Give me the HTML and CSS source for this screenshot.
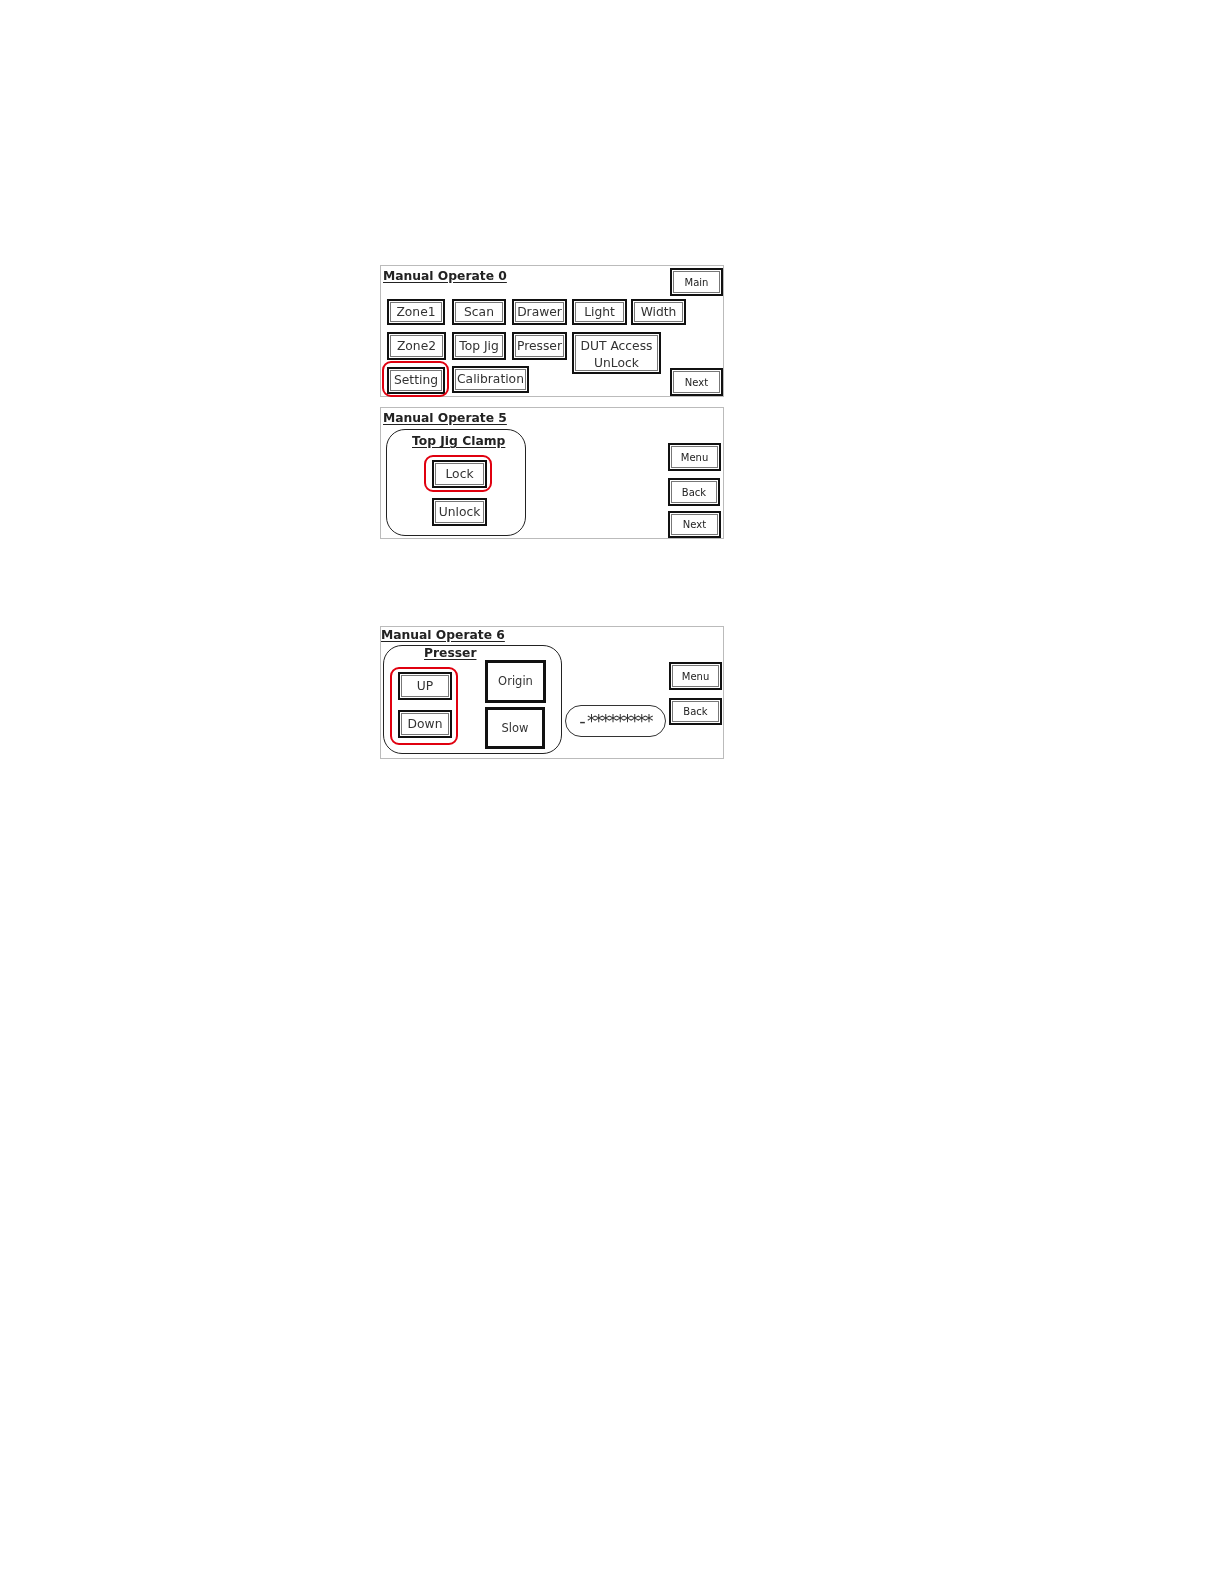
FILE: index.html
```html
<!DOCTYPE html>
<html lang="en">
<head>
<meta charset="utf-8">
<title>Manual Operate</title>
<link rel="stylesheet" href="styles.css">
</head>
<body>
<main class="page">
  <section class="panel p0">
    <h2 class="title t0">Manual Operate 0</h2>
    <div class="btn main0 small">Main</div>
    <div class="btn zone1">Zone1</div>
    <div class="btn scan">Scan</div>
    <div class="btn drawer">Drawer</div>
    <div class="btn light">Light</div>
    <div class="btn width">Width</div>
    <div class="btn zone2">Zone2</div>
    <div class="btn topjig">Top Jig</div>
    <div class="btn presser">Presser</div>
    <div class="btn dut">DUT Access<br>UnLock</div>
    <div class="btn setting">Setting</div>
    <div class="btn calibration">Calibration</div>
    <div class="btn next0 small">Next</div>
    <div class="mark mark-setting"></div>
  </section>

  <section class="panel p5">
    <h2 class="title t5">Manual Operate 5</h2>
    <div class="group g5"></div>
    <h3 class="subtitle s5">Top Jig Clamp</h3>
    <div class="btn lock">Lock</div>
    <div class="btn unlock">Unlock</div>
    <div class="btn menu5 small">Menu</div>
    <div class="btn back5 small">Back</div>
    <div class="btn next5 small">Next</div>
    <div class="mark mark-lock"></div>
  </section>

  <section class="panel p6">
    <h2 class="title t6">Manual Operate 6</h2>
    <div class="group g6"></div>
    <h3 class="subtitle s6">Presser</h3>
    <div class="btn up">UP</div>
    <div class="btn down">Down</div>
    <div class="btn plain origin">Origin</div>
    <div class="btn plain slow">Slow</div>
    <div class="readout"><span class="dash">-</span>*********</div>
    <div class="btn menu6 small">Menu</div>
    <div class="btn back6 small">Back</div>
    <div class="mark mark-updown"></div>
  </section>
</main>
</body>
</html>
```

FILE: styles.css
```css
html, body { margin: 0; background: #fff; }
body { font-family: "DejaVu Sans", sans-serif; color: #222; }
.page {
  width: 1224px; height: 1584px; box-sizing: border-box;
  padding: 265px 0 0 380px;
  display: flex; flex-direction: column;
}
.panel {
  position: relative; box-sizing: border-box; width: 344px;
  border: 1px solid #bbb; background: #fff; filter: blur(0.35px);
}
.p0 { height: 132px; }
.p5 { height: 132px; margin-top: 10px; }
.p6 { height: 133px; margin-top: 87px; }

.title, .subtitle {
  position: absolute; margin: 0; white-space: nowrap;
  font: bold 12.3px "DejaVu Sans", sans-serif; color: #222;
  text-decoration: underline; text-underline-offset: 2px;
}
.t0 { left: 2px; top: 3px; }
.t5 { left: 2px; top: 3px; }
.t6 { left: 0; top: 1px; }
.s5 { left: 31px; top: 26px; }
.s6 { left: 43px; top: 19px; }

.btn {
  position: absolute; box-sizing: border-box;
  display: flex; align-items: center; justify-content: center; text-align: center;
  border: 2.5px solid #111; background: #fff;
  box-shadow: inset 0 0 0 1px #fff, inset 0 0 0 2px #777;
  font-size: 12.3px; line-height: 17px; color: #333; white-space: nowrap;
}
.small { font-size: 10px; color: #222; }
.plain { border-width: 3px; box-shadow: none; font-size: 11.5px; }

.main0 { left: 289px; top: 2px; width: 53px; height: 28px; }
.zone1 { left: 6px; top: 33px; width: 58px; height: 26px; }
.scan { left: 71px; top: 33px; width: 54px; height: 26px; }
.drawer { left: 131px; top: 33px; width: 55px; height: 26px; }
.light { left: 191px; top: 33px; width: 55px; height: 26px; }
.width { left: 250px; top: 33px; width: 55px; height: 26px; }
.zone2 { left: 6px; top: 66px; width: 59px; height: 28px; }
.topjig { left: 71px; top: 66px; width: 54px; height: 28px; }
.presser { left: 131px; top: 66px; width: 55px; height: 28px; }
.dut { left: 191px; top: 66px; width: 89px; height: 42px; padding-top: 3px; }
.setting { left: 6px; top: 101px; width: 58px; height: 27px; }
.calibration { left: 71px; top: 100px; width: 77px; height: 27px; }
.next0 { left: 289px; top: 102px; width: 53px; height: 28px; }

.group { position: absolute; box-sizing: border-box; border: 1px solid #222; border-radius: 19px; background: transparent; }
.g5 { left: 5px; top: 21px; width: 140px; height: 107px; }
.g6 { left: 2px; top: 18px; width: 179px; height: 109px; }

.lock { left: 51px; top: 52px; width: 55px; height: 28px; }
.unlock { left: 51px; top: 90px; width: 55px; height: 28px; }
.menu5 { left: 287px; top: 35px; width: 53px; height: 28px; }
.back5 { left: 287px; top: 70px; width: 52px; height: 28px; }
.next5 { left: 287px; top: 103px; width: 53px; height: 27px; }

.up { left: 17px; top: 45px; width: 54px; height: 28px; }
.down { left: 17px; top: 83px; width: 54px; height: 28px; }
.origin { left: 104px; top: 33px; width: 61px; height: 43px; }
.slow { left: 104px; top: 80px; width: 60px; height: 42px; }
.readout {
  position: absolute; box-sizing: border-box; left: 184px; top: 78px; width: 101px; height: 32px;
  border: 1px solid #333; border-radius: 16px;
  display: flex; align-items: center; justify-content: center;
  font-size: 18px; line-height: 30px; color: #333; letter-spacing: -1.8px;
}
.dash { margin-right: 3px; }
.menu6 { left: 288px; top: 35px; width: 53px; height: 28px; }
.back6 { left: 288px; top: 71px; width: 53px; height: 27px; }

.mark { position: absolute; box-sizing: border-box; border: 2.5px solid #e0000f; border-radius: 9px; }
.mark-setting { left: 1px; top: 95px; width: 67px; height: 36px; }
.mark-lock { left: 43px; top: 47px; width: 68px; height: 37px; }
.mark-updown { left: 9px; top: 40px; width: 68px; height: 78px; }
```
